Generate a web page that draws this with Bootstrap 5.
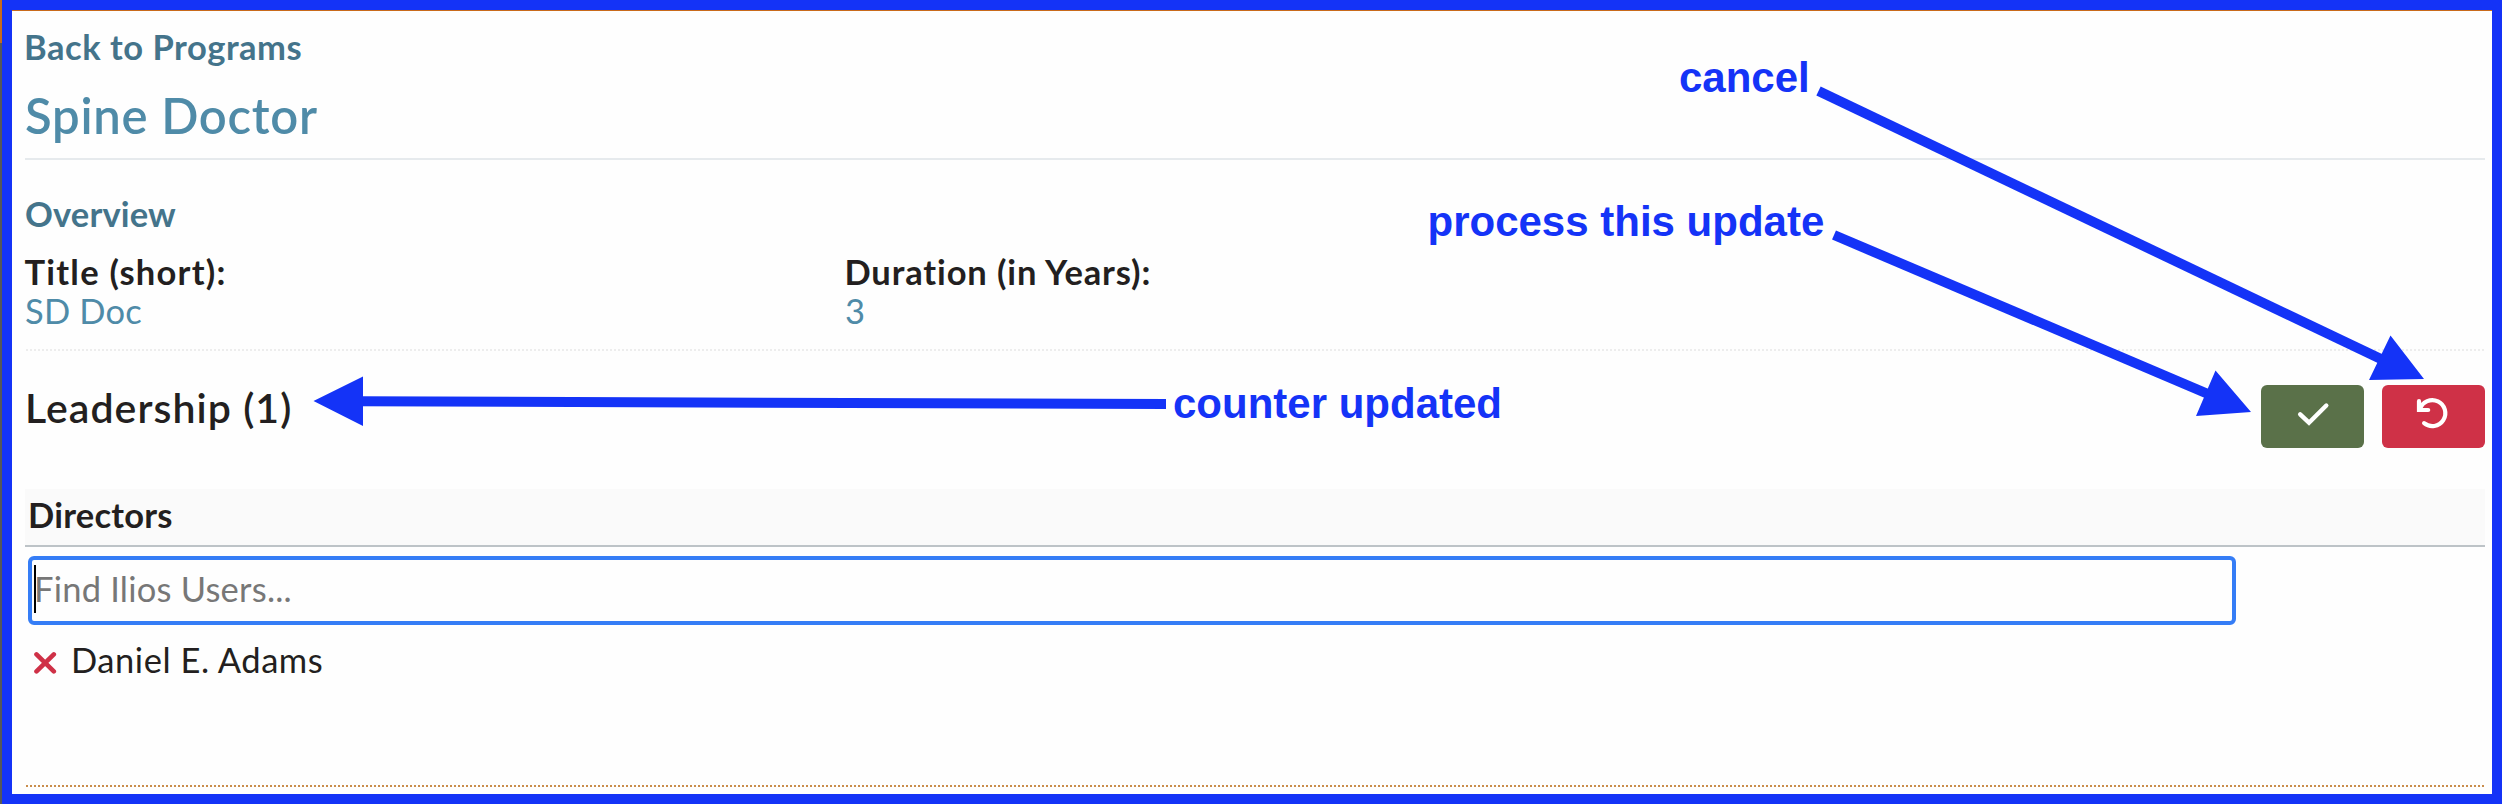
<!DOCTYPE html>
<html lang="en">
<head>
<meta charset="utf-8">
<title>Spine Doctor</title>
<link href="https://cdn.jsdelivr.net/npm/bootstrap@5.3.0/dist/css/bootstrap.min.css" rel="stylesheet">
<script src="https://cdn.jsdelivr.net/npm/bootstrap@5.3.0/dist/js/bootstrap.bundle.min.js"></script>
<style>
:root { --marker: #1433f7; --teal-dark: #44748b; --teal: #4f8ba8; --ink: #231f20; }
body { font-family: Lato, sans-serif; font-size: 34.5px; line-height: 44px; color: var(--ink); background: #fefefe; }
.stage { height: 804px; padding-left: 2px; background: linear-gradient(#c96a1b 43px, #575757 43px); }
.frame { height: 804px; border: 10px solid var(--marker); background: #fefefe; }
.sheet { border-top: 1px solid #c96a1b; padding: 14px 7px 0 13px; }
.back-link { color: var(--teal-dark); letter-spacing: .52px; font-weight: 700; margin-left: -1px; }
.program-title { font-size: 49px; line-height: 60px; font-weight: 600; letter-spacing: .74px; color: var(--teal); margin: 16px 0 0; padding-bottom: 13px; border-bottom: 2px solid #e6eaed; }
.overview { margin-top: 32px; padding-bottom: 19px; }
.overview h2 { font-size: 34.5px; line-height: 44px; letter-spacing: .15px; font-weight: 700; color: var(--teal-dark); margin: 0 0 16px; }
.facts { line-height: 39px; display: grid; grid-template-columns: 820px 1fr; }
.facts dt { font-weight: 700; letter-spacing: 1.23px; margin-left: -.5px; }
.facts div + div dt { letter-spacing: .87px; }
.facts dd { margin: 0; color: var(--teal); letter-spacing: .19px; }
.dots { height: 2px; margin-left: 1px; background: repeating-linear-gradient(90deg, var(--dot) 0 2px, transparent 2px 4px); }
.dots-gray { --dot: #ededed; }
.dots-gold { --dot: #c98d4c; margin-top: 103px; }
.leadership { margin-top: 32px; }
.leadership h3 { font-size: 41px; line-height: 50px; font-weight: 600; letter-spacing: 1.05px; margin: 0; }
.actions { gap: 18px; margin-top: 2px; }
.actions .btn { width: 103px; height: 63px; border-radius: 6px; border: 0; padding: 0; color: #fff; }
.actions svg { display: block; }
.save { background: #5a7149 !important; }
.undo { background: #cf3147 !important; }
.directors-head { margin-top: 41px; height: 58px; padding: 4px 3px 0; background: #fafafa; border-bottom: 2px solid #bdc3c7; font-weight: 700; letter-spacing: .22px; }
.search { margin: 9px 0 0 3px; width: 2208px; height: 69px; border: 4px solid #357df6; border-radius: 6px; background: #fefefe; padding: 0 2px 4px; }
.caret { width: 2px; height: 48px; background: #000; }
.placeholder-text { color: #777; letter-spacing: .22px; margin-left: -2px; padding-top: 1px; }
.person { margin-top: 13px; padding-left: 8px; letter-spacing: .54px; }
.person svg { margin-right: 14px; }
.notes { inset: 0; pointer-events: none; fill: var(--marker); font: 700 42px "Liberation Sans", sans-serif; }
</style>
</head>
<body>
<div class="stage position-relative overflow-hidden">
  <div class="frame">
    <main class="sheet">
      <a href="#" class="back-link d-block text-decoration-none">Back to Programs</a>
      <h1 class="program-title">Spine Doctor</h1>
      <section class="overview">
        <h2>Overview</h2>
        <dl class="facts mb-0">
          <div><dt>Title (short):</dt><dd>SD Doc</dd></div>
          <div><dt>Duration (in Years):</dt><dd>3</dd></div>
        </dl>
      </section>
      <div class="dots dots-gray"></div>
      <section>
        <div class="leadership d-flex justify-content-between align-items-start">
          <h3>Leadership (1)</h3>
          <div class="actions d-flex">
            <button class="btn save" aria-label="Save"><svg width="103" height="63" fill="none" stroke="#fff" stroke-width="4.4" stroke-linecap="round"><path d="M39.2 29.3 48 37.7 65.3 20.5"/></svg></button>
            <button class="btn undo" aria-label="Cancel"><svg width="103" height="63" fill="none" stroke="#fff" stroke-width="4.2" stroke-linecap="round"><path d="M37 16.2V25H46.2M38 24A13 13 0 1 1 42.1 38.2" stroke-linejoin="miter"/></svg></button>
          </div>
        </div>
        <div class="directors-head">Directors</div>
        <div class="search d-flex align-items-center"><span class="caret"></span><span class="placeholder-text">Find Ilios Users...</span></div>
        <div class="person d-flex"><svg width="24" height="44" fill="none" stroke="#cf3147" stroke-width="4.6" stroke-linecap="round"><path d="M3.5 16.4 20.8 33.4M20.8 16.4 3.5 33.4"/></svg>Daniel E. Adams</div>
      </section>
      <div class="dots dots-gold"></div>
    </main>
  </div>
  <svg class="notes position-absolute" width="2502" height="804">
    <text x="1679" y="91.5">cancel</text>
    <text x="1427.5" y="235.5">process this update</text>
    <text x="1173" y="417.5">counter updated</text>
    <g stroke="#1433f7" stroke-width="10">
      <path d="M1818.5 91 2382 359.5"/><path d="M1834 235 2208 394"/><path d="M1166 404 360 401.3"/>
    </g>
    <path d="M2424 379 2390.5 335.5 2369 380ZM2251 412 2215.5 370.5 2196 416ZM313.5 401 363 376.5V426Z"/>
  </svg>
</div>
</body>
</html>
